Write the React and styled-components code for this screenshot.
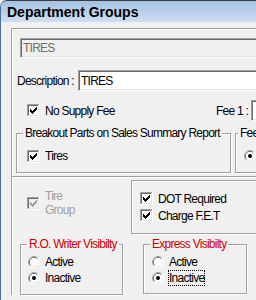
import React from 'react';
import styled, { createGlobalStyle } from 'styled-components';

const GlobalStyle = createGlobalStyle`
  html, body { margin: 0; padding: 0; background: #f0f0f0; }
  body { font-family: "Liberation Sans", Arial, sans-serif; font-size: 12px; line-height: 14px; }
  *, *::before, *::after { box-sizing: border-box; }
`;

const Window = styled.div`
  width: 256px;
  height: 300px;
  overflow: hidden;
  background: #f0f0f0;
  border-top: 1px solid #3c3c3c;
  border-left: 1px solid #4d6f9c;
  border-top-left-radius: 7px;
  color: #000;
  letter-spacing: -0.75px;
`;

const TitleBar = styled.div`
  height: 21px;
  padding: 3px 0 0 6px;
  background: linear-gradient(#a4c1e3, #cfdef0);
  font-size: 14px;
  font-weight: bold;
  line-height: 16px;
  letter-spacing: 0;
  white-space: nowrap;
`;

const Body = styled.div`
  padding: 6px 0 0 10px;
`;

const Panel = styled.div`
  width: 320px;
  display: flex;
  flex-direction: column;
  border-top: 1px solid #a0a0a0;
  border-left: 1px solid #a0a0a0;
  box-shadow: inset 1px 1px 0 #fff;
`;

const Section = styled.div`
  display: flex;
  flex-direction: column;
  height: ${p => p.$h}px;
  border-top: ${p => (p.$divider ? '1px solid #a0a0a0' : 'none')};
  box-shadow: ${p => (p.$divider ? 'inset 1px 1px 0 #fff' : 'none')};
`;

const TextBox = styled.input`
  display: block;
  flex: none;
  width: ${p => p.$w}px;
  height: ${p => p.$h}px;
  margin: ${p => p.$m || 0};
  padding: 0 2px;
  border: 1px solid;
  border-color: #a0a0a0 #fff #fff #a0a0a0;
  box-shadow: inset 1px 1px 0 #696969, inset -1px -1px 0 #e3e3e3;
  background: ${p => (p.$dim ? '#f0f0f0' : '#fff')};
  color: ${p => (p.$dim ? '#6d6d6d' : '#000')};
  font: inherit;
  letter-spacing: inherit;
  outline: none;
`;

const Row = styled.div`
  display: flex;
  align-items: ${p => p.$align || 'center'};
  height: ${p => (p.$h ? `${p.$h}px` : 'auto')};
  margin-top: ${p => p.$top || 0}px;
  padding-left: ${p => p.$left || 0}px;
`;

const Label = styled.span`
  flex: none;
  width: ${p => p.$w}px;
  padding-right: ${p => p.$pr || 0}px;
  text-align: ${p => p.$align || 'left'};
  white-space: nowrap;
`;

const CheckItem = styled.label`
  display: flex;
  flex: none;
  align-items: center;
  gap: 5px;
  width: ${p => (p.$w ? `${p.$w}px` : 'auto')};
  height: ${p => (p.$h ? `${p.$h}px` : 'auto')};
  margin-left: ${p => p.$ml || 0}px;
  margin-top: ${p => p.$mt || 0}px;
  color: ${p => (p.$disabled ? '#a0a0a0' : '#000')};
  white-space: nowrap;
  svg { flex: none; }
`;

const RadioItem = styled.label`
  display: flex;
  align-items: center;
  gap: 4px;
  height: 16px;
  margin-left: ${p => p.$ml || 0}px;
  white-space: nowrap;
  svg { flex: none; }
`;

const RadioText = styled.span`
  padding: 0 0 0 0;
  line-height: 14px;
  border: 1px dotted ${p => (p.$focus ? '#000' : 'transparent')};
`;

const Group = styled.fieldset`
  flex: none;
  min-width: 0;
  width: ${p => p.$w}px;
  margin: 0 0 0 ${p => p.$ml || 0}px;
  padding: 0 0 ${p => p.$pb || 0}px ${p => p.$pl || 6}px;
  border: 1px solid #a0a0a0;
  box-shadow: 1px 1px 0 #fff, inset 1px 1px 0 #fff;
`;

const Legend = styled.legend`
  padding: 0 2px;
  line-height: 14px;
  color: ${p => p.$color || '#000'};
  white-space: nowrap;
`;

const GroupBody = styled.div`
  display: flex;
  flex-direction: column;
  margin-top: ${p => p.$mt || 0}px;
`;

const EtchedBox = styled.div`
  flex: none;
  width: 200px;
  padding: 9px 0 9px 8px;
  border: 1px solid #a0a0a0;
  box-shadow: 1px 1px 0 #fff, inset 1px 1px 0 #fff;
`;

const TwoLine = styled.span`
  display: flex;
  flex-direction: column;
  line-height: 14px;
`;

const CHECK = 'M3 5h1v1h1v1h1v-1h1v-1h1v-1h1v-1h1v3h-1v1h-1v1h-1v1h-1v1h-1v-1h-1v-1h-1z';

const CheckBox = ({ checked, disabled }) => (
  <svg width="13" height="13" viewBox="0 0 13 13" shapeRendering="crispEdges">
    <rect x="0" y="0" width="13" height="13" fill="#fff" />
    <path d="M0 0H12V1H1V12H0Z" fill="#a0a0a0" />
    <path d="M1 1H11V2H2V11H1Z" fill="#696969" />
    <path d="M11 1H12V12H1V11H11Z" fill="#e3e3e3" />
    <rect x="2" y="2" width="9" height="9" fill={disabled ? '#f0f0f0' : '#fff'} />
    {checked && <path d={CHECK} fill={disabled ? '#a0a0a0' : '#000'} />}
  </svg>
);

const Radio = ({ checked }) => (
  <svg width="12" height="12" viewBox="0 0 12 12">
    <path d="M2.11 9.89A5.5 5.5 0 0 1 9.89 2.11" fill="none" stroke="#a0a0a0" />
    <path d="M9.89 2.11A5.5 5.5 0 0 1 2.11 9.89" fill="none" stroke="#fff" />
    <path d="M2.82 9.18A4.5 4.5 0 0 1 9.18 2.82" fill="none" stroke="#696969" />
    <path d="M9.18 2.82A4.5 4.5 0 0 1 2.82 9.18" fill="none" stroke="#e3e3e3" />
    <circle cx="6" cy="6" r="4" fill="#fff" />
    {checked && <circle cx="6" cy="6" r="2" fill="#000" />}
  </svg>
);

const App = () => (
  <>
    <GlobalStyle />
    <Window>
      <TitleBar>Department Groups</TitleBar>
      <Body>
        <Panel>
          <Section $h={147}>
            <TextBox $w={300} $h={20} $m="9px 0 0 8px" $dim readOnly value="TIRES" />
            <Row $h={21} $top={12} $left={5}>
              <Label $w={61}>Description :</Label>
              <TextBox $w={200} $h={21} readOnly value="TIRES" />
            </Row>
            <Row $h={21} $top={9} $left={15}>
              <CheckItem $w={185}>
                <CheckBox checked />
                No Supply Fee
              </CheckItem>
              <Label $w={39} $pr={3} $align="right">Fee 1 :</Label>
              <TextBox $w={60} $h={21} readOnly value="" />
            </Row>
            <Row $top={5} $left={4} $align="flex-start">
              <Group $w={215} $pl={6} $pb={8}>
                <Legend>Breakout Parts on Sales Summary Report</Legend>
                <GroupBody $mt={8}>
                  <CheckItem $h={16} $ml={4}>
                    <CheckBox checked />
                    Tires
                  </CheckItem>
                </GroupBody>
              </Group>
              <Group $w={120} $ml={4} $pl={2} $pb={8}>
                <Legend>Fee Type</Legend>
                <GroupBody $mt={8}>
                  <RadioItem $ml={6}>
                    <Radio checked />
                    <RadioText>Flat</RadioText>
                  </RadioItem>
                </GroupBody>
              </Group>
            </Row>
          </Section>
          <Section $divider>
            <Row $top={3} $align="flex-start">
              <Row $left={15} style={{ width: 139 }} $align="flex-start">
                <CheckItem $disabled $mt={9}>
                  <CheckBox checked disabled />
                  <TwoLine>
                    <span>Tire</span>
                    <span>Group</span>
                  </TwoLine>
                </CheckItem>
              </Row>
              <EtchedBox>
                <CheckItem $h={17}>
                  <CheckBox checked />
                  DOT Required
                </CheckItem>
                <CheckItem $h={17}>
                  <CheckBox checked />
                  Charge F.E.T
                </CheckItem>
              </EtchedBox>
            </Row>
            <Row $top={3} $left={8} $align="flex-start">
              <Group $w={103} $pl={6} $pb={8}>
                <Legend $color="#cc0000">R.O. Writer Visibilty</Legend>
                <GroupBody $mt={3}>
                  <RadioItem $ml={1}>
                    <Radio />
                    <RadioText>Active</RadioText>
                  </RadioItem>
                  <RadioItem $ml={1}>
                    <Radio checked />
                    <RadioText>Inactive</RadioText>
                  </RadioItem>
                </GroupBody>
              </Group>
              <Group $w={104} $ml={20} $pl={6} $pb={7}>
                <Legend $color="#cc0000">Express Visibilty</Legend>
                <GroupBody $mt={3}>
                  <RadioItem $ml={2}>
                    <Radio />
                    <RadioText>Active</RadioText>
                  </RadioItem>
                  <RadioItem $ml={2}>
                    <Radio checked />
                    <RadioText $focus>Inactive</RadioText>
                  </RadioItem>
                </GroupBody>
              </Group>
            </Row>
          </Section>
        </Panel>
      </Body>
    </Window>
  </>
);

export default App;
